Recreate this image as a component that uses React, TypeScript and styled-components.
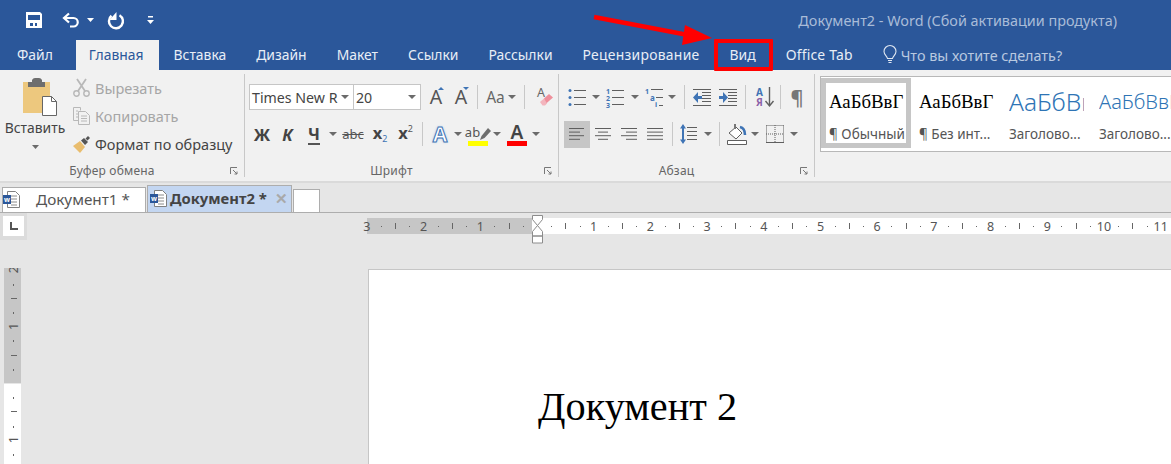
import React from 'react';
import styled, { createGlobalStyle } from 'styled-components';

const UI = `"Noto Sans", "Open Sans", sans-serif`;
const GREY = '#5f5f5f';
const BLUE = '#3f74b5';

const GlobalStyle = createGlobalStyle`
  html, body { margin: 0; padding: 0; background: #e6e6e6; }
  body { font-family: ${UI}; }
  svg { overflow: visible; }
`;

const Window = styled.div`
  position: relative;
  width: 1171px;
  height: 464px;
  overflow: hidden;
  display: flex;
  flex-direction: column;
  background: #e6e6e6;
`;

const TitleBar = styled.div`
  height: 40px;
  background: #2b579a;
  display: flex;
  align-items: center;
  padding: 0 54px 0 26px;
  flex: none;
`;

const QuickIcon = styled.span<{ $w: number }>`
  display: flex;
  width: ${(p) => p.$w}px;
  justify-content: flex-start;
  align-items: center;
`;

const Title = styled.div`
  margin-left: auto;
  color: #a9bcd8;
  font-size: 14.4px;
`;

const TabBar = styled.div`
  height: 30px;
  background: #2b579a;
  display: flex;
  padding-left: 2px;
  flex: none;
`;

const Tab = styled.div<{ $active?: boolean; $file?: boolean; $spread?: number }>`
  padding: 0 15px 0 ${(p) => (p.$active ? 13 : 15)}px;
  margin-right: ${(p) => (p.$file ? 8 : 0)}px;
  line-height: 29px;
  font-size: 13.9px;
  letter-spacing: ${(p) => p.$spread ?? 0}px;
  color: ${(p) => (p.$active ? '#2b579a' : '#e8eef6')};
  background: ${(p) => (p.$active ? '#f1f1f1' : 'transparent')};
`;

const Search = styled.div`
  display: flex;
  align-items: center;
  gap: 4px;
  padding-left: 15px;
  font-size: 14.4px;
  color: #b9c9e0;
`;

const Ribbon = styled.div`
  height: 113px;
  flex: none;
  box-sizing: border-box;
  background: #f1f1f1;
  border-bottom: 2px solid #dadada;
  padding: 4px 0;
  display: flex;
`;

const Group = styled.div<{ $w: number }>`
  width: ${(p) => p.$w}px;
  flex: none;
  box-sizing: border-box;
  border-right: 1px solid #c8c8c8;
  display: flex;
  flex-direction: column;
`;

const GroupBody = styled.div`
  flex: 1;
  padding-top: 10px;
`;

const Footer = styled.div`
  display: flex;
  align-items: flex-start;
  height: 14px;
`;

const FooterLabel = styled.div`
  flex: 1;
  text-align: center;
  font-size: 12px;
  line-height: 16px;
  color: #666;
  letter-spacing: 0.2px;
`;

const Launcher = styled.div`
  width: 20px;
  padding-top: 4px;
  display: flex;
  justify-content: center;
`;

const ClipBody = styled.div`
  flex: 1;
  min-height: 0;
  display: flex;
`;

const PasteButton = styled.div`
  width: 66px;
  flex: none;
  display: flex;
  flex-direction: column;
  align-items: center;
  padding: 4px 0 0 4px;
  box-sizing: border-box;
`;

const PasteArt = styled.div`
  display: flex;
  margin-left: 10px;
`;

const PasteLabel = styled.div`
  font-size: 13.9px;
  color: #444;
  line-height: 20px;
  margin-top: 2px;
`;

const PasteCaret = styled.div`
  display: flex;
  margin-top: 7px;
`;

const ClipActions = styled.div`
  display: flex;
  flex-direction: column;
  padding: 4px 0 0 7px;
  gap: 8px;
`;

const ClipAction = styled.div<{ $off?: boolean }>`
  height: 20px;
  display: flex;
  align-items: center;
  gap: 5px;
  font-size: 14.5px;
  white-space: nowrap;
  color: ${(p) => (p.$off ? '#a6a6a6' : '#444')};
`;

const ToolRow = styled.div<{ $gap?: number; $pad?: number }>`
  height: 26px;
  display: flex;
  align-items: center;
  margin-top: ${(p) => p.$gap ?? 0}px;
  padding-left: ${(p) => p.$pad ?? 0}px;
`;

const Slot = styled.div<{ $w: number; $on?: boolean }>`
  width: ${(p) => p.$w}px;
  height: 27px;
  flex: none;
  display: flex;
  justify-content: center;
  align-items: center;
  background: ${(p) => (p.$on ? '#c6c6c6' : 'transparent')};
`;

const Sep = styled.div<{ $l: number; $r: number }>`
  width: 1px;
  height: 24px;
  flex: none;
  background: #c8c8c8;
  margin: 0 ${(p) => p.$r}px 0 ${(p) => p.$l}px;
`;

const Caret = styled.span`
  display: block;
  width: 0;
  height: 0;
  border-left: 4px solid transparent;
  border-right: 4px solid transparent;
  border-top: 4px solid #6b6b6b;
`;

const Combo = styled.div<{ $w: number; $left?: boolean }>`
  width: ${(p) => p.$w}px;
  height: 26px;
  flex: none;
  box-sizing: border-box;
  background: #fff;
  border: 1px solid #c6c6c6;
  margin-left: ${(p) => (p.$left ? 0 : -1)}px;
  padding: 0 4px 0 2px;
  display: flex;
  align-items: center;
  justify-content: space-between;
  font-size: 14.2px;
  color: #444;
  white-space: nowrap;
`;

const FormatLetter = styled.span<{ $italic?: boolean; $line?: boolean }>`
  font-size: 16.5px;
  font-weight: 700;
  font-style: ${(p) => (p.$italic ? 'italic' : 'normal')};
  color: #444;
  border-bottom: ${(p) => (p.$line ? '2px solid #555' : 'none')};
  line-height: 19px;
`;

const Strike = styled.span`
  font-size: 13px;
  color: #555;
  text-decoration: line-through;
`;

const Script = styled.span`
  font-size: 16.5px;
  font-weight: 700;
  color: #444;
  display: flex;
  align-items: baseline;
  line-height: 18px;
`;

const ScriptMark = styled.sup<{ $low?: boolean }>`
  font-size: 9px;
  font-weight: 400;
  color: ${(p) => (p.$low ? BLUE : '#555')};
  vertical-align: baseline;
  position: relative;
  top: ${(p) => (p.$low ? 3 : -7)}px;
`;

const SizeA = styled.span`
  position: relative;
  font-size: 19.5px;
  color: #555;
  line-height: 22px;
`;

const SizeMark = styled.span<{ $down?: boolean }>`
  position: absolute;
  right: -2px;
  top: 1px;
  width: 0;
  height: 0;
  border-left: 3px solid transparent;
  border-right: 3px solid transparent;
  border-bottom: ${(p) => (p.$down ? '0' : `3px solid ${BLUE}`)};
  border-top: ${(p) => (p.$down ? `3px solid ${BLUE}` : '0')};
`;

const CaseLabel = styled.span`
  font-size: 15.5px;
  color: #666;
`;

const EffectA = styled.span`
  font-size: 21px;
  font-weight: 700;
  line-height: 24px;
  color: #fff;
  -webkit-text-stroke: 1px #3f74b5;
  text-shadow: 0 0 3px #9cc0e8;
`;

const ColorStack = styled.div`
  display: flex;
  flex-direction: column;
  align-items: center;
`;

const ColorA = styled.span`
  font-size: 19px;
  font-weight: 600;
  line-height: 18px;
  color: #444;
`;

const ColorBar = styled.div<{ $color: string }>`
  width: 20px;
  height: 5px;
  background: ${(p) => p.$color};
`;

const HighlightTop = styled.div`
  display: flex;
  align-items: flex-end;
  height: 18px;
  font-size: 13px;
  line-height: 17px;
  color: #555;
`;

const Pilcrow = styled.span`
  font-size: 20px;
  font-weight: 600;
  color: #777;
`;

const Gallery = styled.div`
  margin: 2px 0 0 5px;
  width: 360px;
  height: 76px;
  box-sizing: border-box;
  flex: none;
  background: #fff;
  border: 1px solid #b8b8b8;
  border-right: none;
  padding-top: 1px;
  display: flex;
`;

const Style = styled.div<{ $on?: boolean }>`
  width: 90px;
  height: 70px;
  flex: none;
  box-sizing: border-box;
  border: 5px solid ${(p) => (p.$on ? '#c6c6c6' : 'transparent')};
  padding: 0 3px;
`;

const Preview = styled.div<{ $heading?: number }>`
  height: 38px;
  width: 75px;
  overflow: hidden;
  white-space: nowrap;
  line-height: 38px;
  font-family: ${(p) => (p.$heading ? UI : `"Liberation Serif", serif`)};
  font-size: ${(p) => p.$heading ?? 18.8}px;
  font-weight: ${(p) => (p.$heading ? 300 : 400)};
  color: ${(p) => (p.$heading ? '#2e74b5' : '#000')};
`;

const StyleName = styled.div`
  margin-top: 4px;
  line-height: 18px;
  font-size: 13.5px;
  color: #555;
  white-space: nowrap;
`;

const DocTabs = styled.div`
  height: 30px;
  flex: none;
  box-sizing: border-box;
  border-bottom: 1px solid #adadad;
  padding-left: 2px;
  display: flex;
  align-items: flex-end;
  gap: 1px;
  background: #e6e6e6;
`;

const DocTab = styled.div<{ $active?: boolean }>`
  width: ${(p) => (p.$active ? 145 : 144)}px;
  height: ${(p) => (p.$active ? 27 : 25)}px;
  box-sizing: border-box;
  border: 1px solid #adadad;
  border-bottom: none;
  background: ${(p) => (p.$active ? '#c3d6f1' : '#fff')};
  display: flex;
  align-items: center;
  padding: 0 0 2px ${(p) => (p.$active ? 2 : 0)}px;
  font-size: ${(p) => (p.$active ? 14.8 : 15.3)}px;
  font-weight: ${(p) => (p.$active ? 700 : 400)};
  color: ${(p) => (p.$active ? '#444' : '#555')};
  white-space: nowrap;
`;

const DocTabName = styled.span<{ $active?: boolean }>`
  margin-left: ${(p) => (p.$active ? 3 : 16)}px;
`;

const CloseMark = styled.span`
  margin-left: auto;
  margin-right: 3px;
  font-size: 15px;
  color: #a9a9a9;
`;

const AddTab = styled.div`
  width: 27px;
  height: 23px;
  box-sizing: border-box;
  border: 1px solid #adadad;
  border-bottom: none;
  background: #fff;
`;

const Work = styled.div`
  flex: 1;
  display: grid;
  grid-template-columns: 367px 1fr;
  grid-template-rows: 56px 1fr;
  min-height: 0;
`;

const Corner = styled.div`
  width: 27px;
  height: 27px;
  box-sizing: border-box;
  background: #dcdcdc;
  padding: 3px;
`;

const CornerKey = styled.div`
  height: 20px;
  background: #fff;
  display: flex;
  align-items: center;
  justify-content: center;
`;

const RulerArt = styled.svg`
  display: block;
  overflow: visible;
`;

const VRulerCell = styled.div`
  padding-left: 4px;
  margin-top: -1px;
  overflow: hidden;
`;

const Page = styled.div`
  margin-left: 1px;
  background: #fff;
  border-top: 1px solid #c6c6c6;
  border-left: 1px solid #c6c6c6;
  padding: 114px 0 0 169px;
  font-family: "Liberation Serif", serif;
  font-size: 40.3px;
  line-height: 46px;
  color: #000;
  overflow: hidden;
`;

const RedBox = styled.div`
  position: absolute;
  left: 714px;
  top: 39px;
  width: 59px;
  height: 32px;
  box-sizing: border-box;
  border: 4px solid #f00;
  border-radius: 1px;
`;

const Arrow = styled.svg`
  position: absolute;
  left: 590px;
  top: 12px;
`;

const Lines = ({ ys, x = 0, w = 16, c = GREY }: { ys: number[]; x?: number; w?: number; c?: string }) => (
  <path d={ys.map((y) => `M${x} ${y + 0.5}h${w}`).join('')} stroke={c} fill="none" />
);

const SaveIcon = () => (
  <svg width="16" height="16" viewBox="0 0 16 16">
    <path d="M0 0h14l2 2v14H0z" fill="#fff" />
    <path d="M2 3h12v5H2zM4 11h7v3H4z" fill="#2b579a" />
    <path d="M7 11h2v3H7z" fill="#fff" />
  </svg>
);

const UndoIcon = () => (
  <svg width="19" height="16" viewBox="0 0 19 16" fill="none" stroke="#fff" strokeWidth="2.2">
    <path d="M7 1.500 2 6l5 4.500" />
    <path d="M2.500 6h9a4.200 4.200 0 0 1 0 8.500H8" />
  </svg>
);

const RedoIcon = () => (
  <svg width="18" height="17" viewBox="0 0 18 17" fill="none" stroke="#fff" strokeWidth="2.4">
    <path d="M12.500 3.200A7 7 0 1 1 4.500 3.800" />
    <path d="M9.500 0V8H2.500z" fill="#fff" stroke="none" />
  </svg>
);

const SmallCaret = ({ c = '#fff' }: { c?: string }) => (
  <svg width="7" height="4" viewBox="0 0 7 4">
    <path d="M0 0h7L3.500 4z" fill={c} />
  </svg>
);

const CustomizeIcon = () => (
  <svg width="7" height="8" viewBox="0 0 7 8">
    <path d="M1 0h5v1.400H1zM0 4h7L3.500 8z" fill="#fff" />
  </svg>
);

const BulbIcon = () => (
  <svg width="14" height="18" viewBox="0 0 14 18" fill="none" stroke="#dfe7f2" strokeWidth="1.100">
    <path d="M4.500 12.500C4 10 1 8.500 1 5.500a6 6 0 0 1 12 0c0 3-3 4.500-3.500 7z" />
    <path d="M5 14.500h4M5.500 16.500h3" />
  </svg>
);

const LauncherIcon = () => (
  <svg width="8" height="8" viewBox="0 0 8 8" fill="none" stroke="#777">
    <path d="M0.500 7V0.500H7" />
    <path d="M3 3l4 4M7 4.500V7H4.500" />
  </svg>
);

const PasteIcon = () => (
  <svg width="34" height="38" viewBox="0 0 34 38">
    <path d="M0 4h27v31H0z" fill="#edc87e" />
    <path d="M5 4h4V2q1-2 3-2h4q2 0 3 2v2h3v5H5z" fill="#6e6e6e" />
    <path d="M19.500 18.500h9l5 5v14h-14z" fill="#fff" stroke="#666" />
    <path d="M28.500 18.500v5h5" fill="none" stroke="#666" />
  </svg>
);

const ScissorsIcon = () => (
  <svg width="17" height="18" viewBox="0 0 17 18" fill="none" stroke="#b8b8b8" strokeWidth="1.400">
    <circle cx="3.500" cy="14.500" r="2.700" />
    <circle cx="13.500" cy="14.500" r="2.700" />
    <path d="M5 12 13 0M12 12 4 0" strokeWidth="1.800" />
  </svg>
);

const CopyIcon = () => (
  <svg width="17" height="18" viewBox="0 0 17 18" fill="none" stroke="#b8b8b8">
    <path d="M7.500 3.500v-3h-7v13h5" />
    <path d="M5.500 4.500h7l4 4v9h-11z" />
    <path d="M3 4h2M3 7h2M3 10h2M8 9h6M8 11.500h6M8 14h6" />
  </svg>
);

const BrushIcon = () => (
  <svg width="17" height="17" viewBox="0 0 17 17">
    <path d="M0 10 7 5l5 6-5 6z" fill="#e9bd6e" />
    <path d="M8 4.500 11 2l4 4-3 3zM12.500 2.500 15 0l2 2-2.500 2.500z" fill="#555" />
  </svg>
);

const ListIcon = ({ marks }: { marks: string[] }) => (
  <svg width="19" height="19" viewBox="0 0 19 19">
    <Lines ys={[2, 9, 16]} x={6} w={12} />
    {marks.map((m, i) =>
      m === '.' ? (
        <circle key={i} cx="2" cy={2.500 + i * 7} r="1.500" fill={BLUE} />
      ) : (
        <text key={i} x="0" y={5.500 + i * 7} fontSize="7" fontWeight="700" fill={BLUE} fontFamily={UI}>
          {m}
        </text>
      ),
    )}
  </svg>
);

const MultiListIcon = () => (
  <svg width="19" height="19" viewBox="0 0 19 19">
    <Lines ys={[1]} x={6} w={12} />
    <Lines ys={[9]} x={11} w={7} />
    <Lines ys={[17]} x={14} w={4} />
    <text x="0" y="6" fontSize="7" fontWeight="700" fill={BLUE} fontFamily={UI}>1</text>
    <text x="5" y="13" fontSize="8" fontWeight="700" fill={BLUE} fontFamily={UI}>a</text>
    <text x="10" y="19" fontSize="7" fontWeight="700" fill={BLUE} fontFamily={UI}>i</text>
  </svg>
);

const IndentIcon = ({ flip }: { flip?: boolean }) => (
  <svg width="18" height="17" viewBox="0 0 18 17">
    <Lines ys={[0, 16]} w={18} />
    <Lines ys={[3, 6, 9, 12]} x={9} w={9} />
    {flip ? <path d="M0 7h4V3l5 5.500-5 5.500v-4H0z" fill={BLUE} /> : <path d="M9 7H5V3L0 8.500 5 14v-4h4z" fill={BLUE} />}
  </svg>
);

const SortIcon = () => (
  <svg width="18" height="20" viewBox="0 0 18 20">
    <text x="0" y="9" fontSize="10" fontWeight="700" fill={BLUE} fontFamily={UI}>А</text>
    <text x="0" y="19" fontSize="10" fontWeight="700" fill="#8a5fa8" fontFamily={UI}>Я</text>
    <path d="M13.500 0v18M9.500 14l4 5 4-5" fill="none" stroke={GREY} strokeWidth="1.400" />
  </svg>
);

const EraserIcon = () => (
  <svg width="17" height="20" viewBox="0 0 17 20">
    <text x="1" y="10" fontSize="12.500" fill="#666" fontFamily={UI}>A</text>
    <path d="M8 11.500 13 7l4 3.500-8 7z" fill="#ef8f9b" />
    <path d="M8 11.500 4 15l2.500 3.500H9l2-2z" fill="#f3b5bd" />
  </svg>
);

const PenIcon = () => (
  <svg width="11" height="13" viewBox="0 0 11 13">
    <path d="M0 12l1.500-4L8 0l3 3-6.500 7z" fill="#6e6e6e" />
  </svg>
);

const AlignIcon = ({ rows }: { rows: [number, number][] }) => (
  <svg width="16" height="12" viewBox="0 0 16 12">
    {rows.map(([x, w], i) => (
      <Lines key={i} ys={[i * 3.600]} x={x} w={w} />
    ))}
  </svg>
);

const SpacingIcon = () => (
  <svg width="18" height="20" viewBox="0 0 18 20">
    <Lines ys={[3, 7, 11, 15]} x={7} w={10} />
    <path d="M3 0l3 4.500H4v11h2L3 20l-3-4.500h2v-11H0z" fill={BLUE} />
  </svg>
);

const FillIcon = () => (
  <svg width="20" height="21" viewBox="0 0 20 21" fill="none">
    <path d="M2 9 9 3l6 6-6 6z" fill="#fff" stroke={GREY} />
    <path d="M7 0h2v5H7z" fill="#777" />
    <path d="M13 3q5 1 5 8" stroke={BLUE} strokeWidth="2.600" />
    <path d="M0.500 16.500h19v4h-19z" fill="#fff" stroke={GREY} />
  </svg>
);

const BordersIcon = () => (
  <svg width="18" height="18" viewBox="0 0 18 18" fill="none" stroke={GREY}>
    <path d="M0.500 0.500h17M0.500 0.500v17M17.500 0.500v17M9 0v17M0 9h18" strokeDasharray="1 1" />
    <path d="M0 17.500h18" />
  </svg>
);

const WordDocIcon = () => (
  <svg width="17" height="17" viewBox="0 0 17 17">
    <path d="M4.500 0.500h8l4 4v12h-12z" fill="#fff" stroke="#808080" />
    <path d="M8 5h6M8 8h6M8 11h6M8 14h6" stroke="#8a8a8a" />
    <path d="M0 4h8v9H0z" fill="#2b579a" />
    <text x="1" y="11" fontSize="7" fontWeight="700" fill="#fff" fontFamily={UI}>w</text>
  </svg>
);

const TabStopIcon = () => (
  <svg width="8" height="8" viewBox="0 0 8 8">
    <path d="M0 0h2v6h6v2H0z" fill="#555" />
  </svg>
);

const UNIT = 56.700;

const HRuler = () => {
  const zero = 170;
  const marks = [];
  for (let k = -12; k <= 48; k++) {
    const x = zero + (k * UNIT) / 4;
    if (k === 0) continue;
    if (k % 4 === 0) {
      marks.push(
        <text key={k} x={x} y="17.500" textAnchor="middle" fontSize="12.500" fill="#555" fontFamily={UI}>
          {Math.abs(k / 4)}
        </text>,
      );
    } else if (k % 2 === 0) {
      marks.push(<path key={k} d={`M${Math.round(x) + 0.5} 10v6`} stroke="#666" />);
    } else {
      marks.push(<path key={k} d={`M${Math.round(x)} 13.500h1`} stroke="#666" />);
    }
  }
  return (
    <RulerArt width="804" height="32" viewBox="0 0 804 32">
      <rect x="0" y="5" width="165" height="16" fill="#c6c6c6" />
      <rect x="165" y="5" width="639" height="16" fill="#fff" />
      {marks}
      <path
        d="M165.500 2.500h10v4l-5 6 5 6v4.500h-10V18.500l5-6-5-6zM165.500 23h10v7h-10z"
        fill="#fff"
        stroke="#8c8c8c"
      />
    </RulerArt>
  );
};

const VRuler = () => {
  const zero = 115;
  const marks = [];
  for (let k = -8; k <= 6; k++) {
    const y = zero + (k * UNIT) / 4;
    if (k === 0) continue;
    if (k % 4 === 0) {
      marks.push(
        <text
          key={k}
          x="0"
          y="0"
          transform={`translate(14 ${y}) rotate(-90)`}
          textAnchor="middle"
          fontSize="12.500"
          fill="#555"
          fontFamily={UI}
        >
          {Math.abs(k / 4)}
        </text>,
      );
    } else if (k % 2 === 0) {
      marks.push(<path key={k} d={`M7 ${Math.round(y) + 0.5}h6`} stroke="#666" />);
    } else {
      marks.push(<path key={k} d={`M9.500 ${Math.round(y)}v2`} stroke="#666" />);
    }
  }
  return (
    <RulerArt width="17" height="197" viewBox="0 0 17 197">
      <rect width="17" height="115" fill="#c6c6c6" />
      <rect y="116" width="17" height="81" fill="#fff" />
      {marks}
    </RulerArt>
  );
};

const TABS: { name: string; spread?: number }[] = [
  { name: 'Вставка' },
  { name: 'Дизайн' },
  { name: 'Макет' },
  { name: 'Ссылки' },
  { name: 'Рассылки' },
  { name: 'Рецензирование', spread: 0.28 },
  { name: 'Вид' },
  { name: 'Office Tab', spread: 0.2 },
];

const ALIGNS: [number, number][][] = [
  [[0, 15], [0, 11], [0, 15], [0, 11]],
  [[0, 16], [3, 10], [0, 16], [3, 10]],
  [[0, 16], [5, 11], [0, 16], [5, 11]],
  [[0, 16], [0, 16], [0, 16], [0, 16]],
];

const STYLES = [
  { text: 'АаБбВвГ', name: '¶ Обычный', on: true },
  { text: 'АаБбВвГ', name: '¶ Без инт...' },
  { text: 'АаБбВв', name: 'Заголово...', heading: 24.500 },
  { text: 'АаБбВвІ', name: 'Заголово...', heading: 20 },
];

const App: React.FC = () => (
  <Window>
    <GlobalStyle />
    <TitleBar>
      <QuickIcon $w={36}><SaveIcon /></QuickIcon>
      <QuickIcon $w={25}><UndoIcon /></QuickIcon>
      <QuickIcon $w={20}><SmallCaret /></QuickIcon>
      <QuickIcon $w={40}><RedoIcon /></QuickIcon>
      <QuickIcon $w={10}><CustomizeIcon /></QuickIcon>
      <Title>Документ2 - Word (Сбой активации продукта)</Title>
    </TitleBar>

    <TabBar>
      <Tab $file>Файл</Tab>
      <Tab $active>Главная</Tab>
      {TABS.map((t) => (
        <Tab key={t.name} $spread={t.spread}>{t.name}</Tab>
      ))}
      <Search>
        <BulbIcon />
        Что вы хотите сделать?
      </Search>
    </TabBar>

    <Ribbon>
      <Group $w={245}>
        <ClipBody>
          <PasteButton>
            <PasteArt><PasteIcon /></PasteArt>
            <PasteLabel>Вставить</PasteLabel>
            <PasteCaret><SmallCaret c="#6b6b6b" /></PasteCaret>
          </PasteButton>
          <ClipActions>
            <ClipAction $off><ScissorsIcon />Вырезать</ClipAction>
            <ClipAction $off><CopyIcon />Копировать</ClipAction>
            <ClipAction><BrushIcon />Формат по образцу</ClipAction>
          </ClipActions>
        </ClipBody>
        <Footer>
          <FooterLabel>Буфер обмена</FooterLabel>
          <Launcher><LauncherIcon /></Launcher>
        </Footer>
      </Group>

      <Group $w={314}>
        <GroupBody>
          <ToolRow $pad={4}>
            <Combo $w={105} $left>Times New R<Caret /></Combo>
            <Combo $w={68}>20<Caret /></Combo>
            <Slot $w={30}><SizeA>A<SizeMark /></SizeA></Slot>
            <Slot $w={20}><SizeA>A<SizeMark $down /></SizeA></Slot>
            <Sep $l={6} $r={5} />
            <Slot $w={25}><CaseLabel>Aa</CaseLabel></Slot>
            <Slot $w={8}><Caret /></Slot>
            <Sep $l={8} $r={4} />
            <Slot $w={30}><EraserIcon /></Slot>
          </ToolRow>
          <ToolRow $gap={11} $pad={5}>
            <Slot $w={24}><FormatLetter>Ж</FormatLetter></Slot>
            <Slot $w={27}><FormatLetter $italic>К</FormatLetter></Slot>
            <Slot $w={26}><FormatLetter $line>Ч</FormatLetter></Slot>
            <Slot $w={12}><Caret /></Slot>
            <Slot $w={28}><Strike>abc</Strike></Slot>
            <Slot $w={26}><Script>x<ScriptMark $low>2</ScriptMark></Script></Slot>
            <Slot $w={25}><Script>x<ScriptMark>2</ScriptMark></Script></Slot>
            <Sep $l={4} $r={5} />
            <Slot $w={24}><EffectA>A</EffectA></Slot>
            <Slot $w={12}><Caret /></Slot>
            <Slot $w={28}>
              <ColorStack>
                <HighlightTop>
                  ab
                  <PenIcon />
                </HighlightTop>
                <ColorBar $color="#ffff00" />
              </ColorStack>
            </Slot>
            <Slot $w={10}><Caret /></Slot>
            <Slot $w={30}>
              <ColorStack>
                <ColorA>A</ColorA>
                <ColorBar $color="#ff0000" />
              </ColorStack>
            </Slot>
            <Slot $w={8}><Caret /></Slot>
          </ToolRow>
        </GroupBody>
        <Footer>
          <FooterLabel>Шрифт</FooterLabel>
          <Launcher><LauncherIcon /></Launcher>
        </Footer>
      </Group>

      <Group $w={256}>
        <GroupBody>
          <ToolRow $pad={5}>
            <Slot $w={26}><ListIcon marks={['.', '.', '.']} /></Slot>
            <Slot $w={11}><Caret /></Slot>
            <Slot $w={29}><ListIcon marks={['1', '2', '3']} /></Slot>
            <Slot $w={10}><Caret /></Slot>
            <Slot $w={28}><MultiListIcon /></Slot>
            <Slot $w={8}><Caret /></Slot>
            <Sep $l={8} $r={4} />
            <Slot $w={26}><IndentIcon /></Slot>
            <Slot $w={26}><IndentIcon flip /></Slot>
            <Sep $l={4} $r={6} />
            <Slot $w={26}><SortIcon /></Slot>
            <Sep $l={2} $r={4} />
            <Slot $w={24}><Pilcrow>¶</Pilcrow></Slot>
          </ToolRow>
          <ToolRow $gap={11} $pad={5}>
            {ALIGNS.map((rows, i) => (
              <Slot key={i} $w={26} $on={i === 0}>
                <AlignIcon rows={rows} />
              </Slot>
            ))}
            <Sep $l={4} $r={3} />
            <Slot $w={26}><SpacingIcon /></Slot>
            <Slot $w={12}><Caret /></Slot>
            <Sep $l={5} $r={4} />
            <Slot $w={26}><FillIcon /></Slot>
            <Slot $w={10}><Caret /></Slot>
            <Slot $w={30}><BordersIcon /></Slot>
            <Slot $w={8}><Caret /></Slot>
          </ToolRow>
        </GroupBody>
        <Footer>
          <FooterLabel>Абзац</FooterLabel>
          <Launcher><LauncherIcon /></Launcher>
        </Footer>
      </Group>

      <Gallery>
        {STYLES.map((s, i) => (
          <Style key={i} $on={s.on}>
            <Preview $heading={s.heading}>{s.text}</Preview>
            <StyleName>{s.name}</StyleName>
          </Style>
        ))}
      </Gallery>
    </Ribbon>

    <DocTabs>
      <DocTab>
        <WordDocIcon />
        <DocTabName>Документ1 *</DocTabName>
      </DocTab>
      <DocTab $active>
        <WordDocIcon />
        <DocTabName $active>Документ2 *</DocTabName>
        <CloseMark>✕</CloseMark>
      </DocTab>
      <AddTab />
    </DocTabs>

    <Work>
      <Corner>
        <CornerKey><TabStopIcon /></CornerKey>
      </Corner>
      <HRuler />
      <VRulerCell><VRuler /></VRulerCell>
      <Page>Документ 2</Page>
    </Work>

    <RedBox />
    <Arrow width="124" height="36" viewBox="0 0 124 36">
      <path d="M4 5 98 23" stroke="#f00" strokeWidth="4.500" />
      <path d="M95 13 122 26 92 33z" fill="#f00" />
    </Arrow>
  </Window>
);

export default App;
